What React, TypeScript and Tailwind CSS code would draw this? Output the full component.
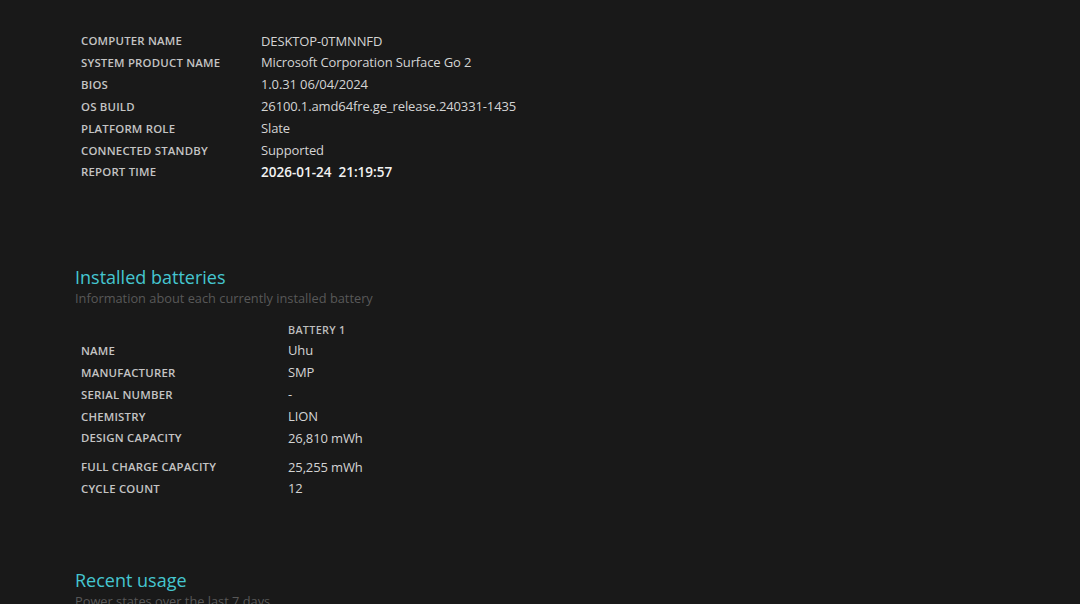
import React from "react";

const font = { fontFamily: '"Open Sans", "Noto Sans", sans-serif' };

const sys: [string, string, boolean?][] = [
  ["COMPUTER NAME", "DESKTOP-0TMNNFD"],
  ["SYSTEM PRODUCT NAME", "Microsoft Corporation Surface Go 2"],
  ["BIOS", "1.0.31 06/04/2024"],
  ["OS BUILD", "26100.1.amd64fre.ge_release.240331-1435"],
  ["PLATFORM ROLE", "Slate"],
  ["CONNECTED STANDBY", "Supported"],
  ["REPORT TIME", "2026-01-24\u00a0\u00a021:19:57", true],
];

const bat: [string, string][] = [
  ["NAME", "Uhu"],
  ["MANUFACTURER", "SMP"],
  ["SERIAL NUMBER", "-"],
  ["CHEMISTRY", "LION"],
  ["DESIGN CAPACITY", "26,810 mWh"],
];
const bat2: [string, string][] = [
  ["FULL CHARGE CAPACITY", "25,255 mWh"],
  ["CYCLE COUNT", "12"],
];

function Row({ label, value, strong, col }: { label: string; value: string; strong?: boolean; col: string }) {
  return (
    <div className="flex items-center h-[21.83px]">
      <div className={`${col} shrink-0 text-[11.4px] font-semibold tracking-[0.2px] text-[#c4c4c4]`}>{label}</div>
      <div
        className={
          strong
            ? "pt-[1px] text-[13.5px] font-semibold tracking-[0px] text-[#f2f2f2]"
            : "pt-[1px] text-[13px] tracking-[-0.12px] text-[#d4d4d4]"
        }
      >
        {value}
      </div>
    </div>
  );
}

export default function App() {
  return (
    <div className="w-[1080px] h-[604px] overflow-hidden bg-[#191919]" style={font}>
      <div className="pt-[30px] pl-[81px]">
        {sys.map(([l, v, s]) => (
          <Row key={l} label={l} value={v} strong={s} col="w-[180px]" />
        ))}
      </div>
      <div className="pl-[75px] mt-[82px]">
        <div className="text-[18px] leading-[24px] text-[#45c6d0]">Installed batteries</div>
        <div className="text-[12.8px] leading-[18px] text-[#585858]">Information about each currently installed battery</div>
      </div>
      <div className="pl-[81px] mt-[14px]">
        <div className="flex items-center h-[19px]">
          <div className="w-[207px]" />
          <div className="text-[10.8px] font-semibold tracking-[0.3px] text-[#bdbdbd]">BATTERY 1</div>
        </div>
        {bat.map(([l, v]) => (
          <Row key={l} label={l} value={v} col="w-[207px]" />
        ))}
        <div className="h-[7px]" />
        {bat2.map(([l, v]) => (
          <Row key={l} label={l} value={v} col="w-[207px]" />
        ))}
      </div>
      <div className="pl-[75px] mt-[68px]">
        <div className="text-[18px] leading-[24px] text-[#45c6d0]">Recent usage</div>
        <div className="text-[12.8px] leading-[18px] text-[#585858]">Power states over the last 7 days</div>
      </div>
    </div>
  );
}
